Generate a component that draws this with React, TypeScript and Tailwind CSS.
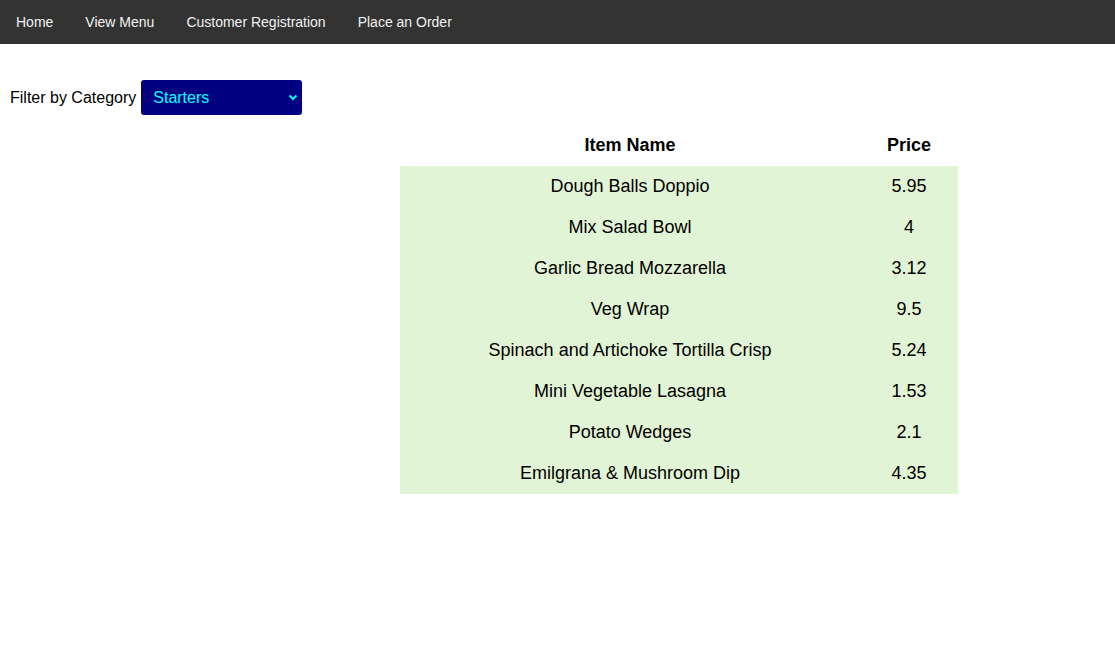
import { useState } from "react";

const starters = [
  { name: "Dough Balls Doppio", price: "5.95" },
  { name: "Mix Salad Bowl", price: "4" },
  { name: "Garlic Bread Mozzarella", price: "3.12" },
  { name: "Veg Wrap", price: "9.5" },
  { name: "Spinach and Artichoke Tortilla Crisp", price: "5.24" },
  { name: "Mini Vegetable Lasagna", price: "1.53" },
  { name: "Potato Wedges", price: "2.1" },
  { name: "Emilgrana & Mushroom Dip", price: "4.35" },
];

const links = ["Home", "View Menu", "Customer Registration", "Place an Order"];

export default function App() {
  const [category, setCategory] = useState("Starters");

  return (
    <div className="min-h-screen bg-white text-black font-['Liberation_Sans',Arial,sans-serif]">
      <nav className="flex h-[44px] items-center bg-[#333333]">
        {links.map((l) => (
          <a key={l} href="#" className="px-4 text-[14px] text-[#f2f2f2]">
            {l}
          </a>
        ))}
      </nav>

      <div className="flex items-center pt-9 pl-[10px]">
        <label className="mr-[5px] text-[16px]">Filter by Category</label>
        <div className="relative">
          <select
            value={category}
            onChange={(e) => setCategory(e.target.value)}
            className="h-[35px] w-[161px] appearance-none rounded-[3px] bg-[#000080] pl-3 text-[16px] text-[#00ffff] outline-none"
          >
            <option>Starters</option>
            <option>Mains</option>
            <option>Desserts</option>
          </select>
          <svg
            className="pointer-events-none absolute right-[4px] top-[14px]"
            width="10"
            height="7"
            viewBox="0 0 10 7"
            fill="none"
          >
            <path d="M1.5 1.5 5 5l3.5-3.5" stroke="#00ffff" strokeWidth="2" />
          </svg>
        </div>
      </div>

      <table className="mt-[10px] ml-[400px] w-[558px] border-collapse text-[18px]">
        <thead>
          <tr className="h-[41px]">
            <th className="w-[460px] font-bold">Item Name</th>
            <th className="font-bold">Price</th>
          </tr>
        </thead>
        <tbody className="bg-[#e2f4d6]">
          {starters.map((s) => (
            <tr key={s.name} className="h-[41px]">
              <td className="text-center">{s.name}</td>
              <td className="text-center">{s.price}</td>
            </tr>
          ))}
        </tbody>
      </table>
    </div>
  );
}
